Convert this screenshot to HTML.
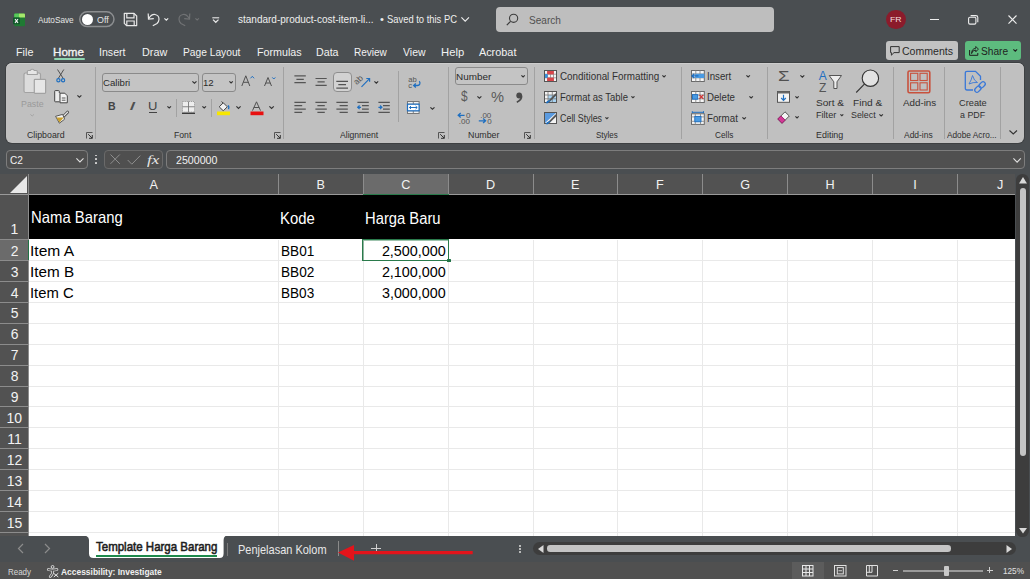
<!DOCTYPE html><html><head><meta charset="utf-8"><style>
html,body{margin:0;padding:0;width:1030px;height:579px;overflow:hidden;background:#4a4e51}
body{position:relative;font-family:"Liberation Sans",sans-serif}
.t{position:absolute;white-space:nowrap;line-height:1;transform-origin:0 0}
svg{overflow:visible}
</style></head><body>
<div style="position:absolute;left:0px;top:0px;width:1030px;height:579px;background:#4a4e51"></div>
<div style="position:absolute;left:6px;top:62.6px;width:1018px;height:80.8px;background:#c0c0c0;border-radius:6px;box-shadow:inset 0 1px 0 #cdcdcd,0 0 0 1px rgba(30,30,30,0.28)"></div>
<div style="position:absolute;left:6px;top:150px;width:82px;height:18.5px;background:#4f4f4f;border:1px solid #7d7d7d;border-radius:4px;box-sizing:border-box"></div>
<div style="position:absolute;left:104px;top:150px;width:59px;height:18.5px;background:#4f4f4f;border:1px solid #6a6a6a;border-radius:4px;box-sizing:border-box"></div>
<div style="position:absolute;left:166px;top:150px;width:858.5px;height:18.5px;background:#505050;border:1px solid #7d7d7d;border-radius:4px;box-sizing:border-box"></div>
<div style="position:absolute;left:0px;top:174px;width:1015px;height:362px;background:#ffffff"></div>
<div style="position:absolute;left:0px;top:174px;width:1015px;height:21px;background:#525252"></div>
<div style="position:absolute;left:0px;top:195px;width:29px;height:341px;background:#525252"></div>
<div style="position:absolute;left:29px;top:195px;width:986px;height:44px;background:#000"></div>
<div style="position:absolute;left:29px;top:260px;width:986px;height:1px;background:#e9e9e9"></div>
<div style="position:absolute;left:0px;top:260px;width:29px;height:1px;background:#8c8c8c"></div>
<div style="position:absolute;left:29px;top:281px;width:986px;height:1px;background:#e9e9e9"></div>
<div style="position:absolute;left:0px;top:281px;width:29px;height:1px;background:#8c8c8c"></div>
<div style="position:absolute;left:29px;top:302px;width:986px;height:1px;background:#e9e9e9"></div>
<div style="position:absolute;left:0px;top:302px;width:29px;height:1px;background:#8c8c8c"></div>
<div style="position:absolute;left:29px;top:323px;width:986px;height:1px;background:#e9e9e9"></div>
<div style="position:absolute;left:0px;top:323px;width:29px;height:1px;background:#8c8c8c"></div>
<div style="position:absolute;left:29px;top:344px;width:986px;height:1px;background:#e9e9e9"></div>
<div style="position:absolute;left:0px;top:344px;width:29px;height:1px;background:#8c8c8c"></div>
<div style="position:absolute;left:29px;top:365px;width:986px;height:1px;background:#e9e9e9"></div>
<div style="position:absolute;left:0px;top:365px;width:29px;height:1px;background:#8c8c8c"></div>
<div style="position:absolute;left:29px;top:386px;width:986px;height:1px;background:#e9e9e9"></div>
<div style="position:absolute;left:0px;top:386px;width:29px;height:1px;background:#8c8c8c"></div>
<div style="position:absolute;left:29px;top:406px;width:986px;height:1px;background:#e9e9e9"></div>
<div style="position:absolute;left:0px;top:406px;width:29px;height:1px;background:#8c8c8c"></div>
<div style="position:absolute;left:29px;top:427px;width:986px;height:1px;background:#e9e9e9"></div>
<div style="position:absolute;left:0px;top:427px;width:29px;height:1px;background:#8c8c8c"></div>
<div style="position:absolute;left:29px;top:448px;width:986px;height:1px;background:#e9e9e9"></div>
<div style="position:absolute;left:0px;top:448px;width:29px;height:1px;background:#8c8c8c"></div>
<div style="position:absolute;left:29px;top:469px;width:986px;height:1px;background:#e9e9e9"></div>
<div style="position:absolute;left:0px;top:469px;width:29px;height:1px;background:#8c8c8c"></div>
<div style="position:absolute;left:29px;top:490px;width:986px;height:1px;background:#e9e9e9"></div>
<div style="position:absolute;left:0px;top:490px;width:29px;height:1px;background:#8c8c8c"></div>
<div style="position:absolute;left:29px;top:511px;width:986px;height:1px;background:#e9e9e9"></div>
<div style="position:absolute;left:0px;top:511px;width:29px;height:1px;background:#8c8c8c"></div>
<div style="position:absolute;left:29px;top:532px;width:986px;height:1px;background:#e9e9e9"></div>
<div style="position:absolute;left:0px;top:532px;width:29px;height:1px;background:#8c8c8c"></div>
<div style="position:absolute;left:0px;top:239px;width:29px;height:1px;background:#8c8c8c"></div>
<div style="position:absolute;left:0px;top:194px;width:1015px;height:1px;background:#9a9a9a"></div>
<div style="position:absolute;left:278px;top:240px;width:1px;height:296px;background:#e9e9e9"></div>
<div style="position:absolute;left:278px;top:174px;width:1px;height:20px;background:#8c8c8c"></div>
<div style="position:absolute;left:363px;top:240px;width:1px;height:296px;background:#e9e9e9"></div>
<div style="position:absolute;left:363px;top:174px;width:1px;height:20px;background:#8c8c8c"></div>
<div style="position:absolute;left:448px;top:240px;width:1px;height:296px;background:#e9e9e9"></div>
<div style="position:absolute;left:448px;top:174px;width:1px;height:20px;background:#8c8c8c"></div>
<div style="position:absolute;left:533px;top:240px;width:1px;height:296px;background:#e9e9e9"></div>
<div style="position:absolute;left:533px;top:174px;width:1px;height:20px;background:#8c8c8c"></div>
<div style="position:absolute;left:617px;top:240px;width:1px;height:296px;background:#e9e9e9"></div>
<div style="position:absolute;left:617px;top:174px;width:1px;height:20px;background:#8c8c8c"></div>
<div style="position:absolute;left:702px;top:240px;width:1px;height:296px;background:#e9e9e9"></div>
<div style="position:absolute;left:702px;top:174px;width:1px;height:20px;background:#8c8c8c"></div>
<div style="position:absolute;left:787px;top:240px;width:1px;height:296px;background:#e9e9e9"></div>
<div style="position:absolute;left:787px;top:174px;width:1px;height:20px;background:#8c8c8c"></div>
<div style="position:absolute;left:872px;top:240px;width:1px;height:296px;background:#e9e9e9"></div>
<div style="position:absolute;left:872px;top:174px;width:1px;height:20px;background:#8c8c8c"></div>
<div style="position:absolute;left:957px;top:240px;width:1px;height:296px;background:#e9e9e9"></div>
<div style="position:absolute;left:957px;top:174px;width:1px;height:20px;background:#8c8c8c"></div>
<div style="position:absolute;left:28px;top:174px;width:1px;height:362px;background:#8c8c8c"></div>
<div style="position:absolute;left:364px;top:174px;width:84px;height:20px;background:#6b6b6b"></div>
<div style="position:absolute;left:363px;top:193.5px;width:86px;height:1.5px;background:#2a7a4b"></div>
<div style="position:absolute;left:0px;top:240px;width:28px;height:20px;background:#6b6b6b"></div>
<div style="position:absolute;left:28px;top:240px;width:1px;height:20px;background:#217346"></div>
<div style="position:absolute;left:362px;top:239px;width:87px;height:22px;border:1px solid #2a7a4b;box-sizing:border-box;box-shadow:inset 1px 1px 0 rgba(42,122,75,0.45)"></div>
<div style="position:absolute;left:447px;top:258.8px;width:3.5px;height:3.5px;background:#217346;border-radius:0.5px"></div>
<svg style="position:absolute;left:10px;top:176px;" width="17" height="17" viewBox="0 0 17 17"><polygon points="17,0 17,17 0,17" fill="#e8e8e8"/></svg>
<div class="t" style="left:38.10px;top:15.75px;font-size:9.16px;color:#e6e6e6;font-weight:400;transform:scaleX(0.8976);">AutoSave</div>
<div class="t" style="left:96.70px;top:15.55px;font-size:9.16px;color:#e6e6e6;font-weight:400;transform:scaleX(0.9679);">Off</div>
<div class="t" style="left:238.40px;top:13.83px;font-size:10.60px;color:#eeeeee;font-weight:400;transform:scaleX(0.9441);">standard-product-cost-item-li...</div>
<div class="t" style="left:380.06px;top:13.83px;font-size:10.60px;color:#eeeeee;font-weight:400;transform:scaleX(1.0482);">•</div>
<div class="t" style="left:387.38px;top:13.83px;font-size:10.60px;color:#eeeeee;font-weight:400;transform:scaleX(0.8864);">Saved to this PC</div>
<div style="position:absolute;left:496px;top:7px;width:277.5px;height:24.7px;background:#bebebe;border-radius:4px"></div>
<div class="t" style="left:528.55px;top:15.89px;font-size:10.17px;color:#505050;font-weight:400;transform:scaleX(0.9909);">Search</div>
<div style="position:absolute;left:886px;top:9.6px;width:19.5px;height:19.5px;background:#8b1b2b;border-radius:50%"></div>
<div class="t" style="left:889.80px;top:15.73px;font-size:7.99px;color:#f2dede;font-weight:400;transform:scaleX(1.0900);">FR</div>
<div class="t" style="left:15.64px;top:46.57px;font-size:10.90px;color:#f2f2f2;font-weight:400;transform:scaleX(0.9912);">File</div>
<div class="t" style="left:52.87px;top:46.57px;font-size:10.90px;color:#f2f2f2;font-weight:400;transform:scaleX(1.0669);-webkit-text-stroke:0.35px #f2f2f2;">Home</div>
<div class="t" style="left:99.45px;top:46.57px;font-size:10.90px;color:#f2f2f2;font-weight:400;transform:scaleX(0.9726);">Insert</div>
<div class="t" style="left:142.03px;top:46.57px;font-size:10.90px;color:#f2f2f2;font-weight:400;transform:scaleX(0.9926);">Draw</div>
<div class="t" style="left:182.88px;top:46.57px;font-size:10.90px;color:#f2f2f2;font-weight:400;transform:scaleX(0.9389);">Page Layout</div>
<div class="t" style="left:256.74px;top:46.57px;font-size:10.90px;color:#f2f2f2;font-weight:400;transform:scaleX(0.9841);">Formulas</div>
<div class="t" style="left:315.74px;top:46.57px;font-size:10.90px;color:#f2f2f2;font-weight:400;transform:scaleX(0.9806);">Data</div>
<div class="t" style="left:353.80px;top:46.57px;font-size:10.90px;color:#f2f2f2;font-weight:400;transform:scaleX(0.9202);">Review</div>
<div class="t" style="left:402.75px;top:46.57px;font-size:10.90px;color:#f2f2f2;font-weight:400;transform:scaleX(0.9622);">View</div>
<div class="t" style="left:440.70px;top:46.57px;font-size:10.90px;color:#f2f2f2;font-weight:400;transform:scaleX(1.0335);">Help</div>
<div class="t" style="left:478.90px;top:46.57px;font-size:10.90px;color:#f2f2f2;font-weight:400;">Acrobat</div>
<div style="position:absolute;left:53.8px;top:58px;width:31.2px;height:2.2px;background:#8fd6b0;border-radius:1px"></div>
<div style="position:absolute;left:886px;top:41.2px;width:72.2px;height:18.6px;background:#c2c2c2;border-radius:3px"></div>
<div class="t" style="left:902.47px;top:46.05px;font-size:11.05px;color:#2a2a2a;font-weight:400;transform:scaleX(0.9548);">Comments</div>
<div style="position:absolute;left:965px;top:41.2px;width:56.4px;height:18.6px;background:#5dbb7e;border-radius:3px"></div>
<div class="t" style="left:981.34px;top:46.35px;font-size:11.05px;color:#1f1f1f;font-weight:400;transform:scaleX(0.9193);">Share</div>
<div class="t" style="left:9.89px;top:153.96px;font-size:11.63px;color:#f0f0f0;font-weight:400;transform:scaleX(0.8710);">C2</div>
<div class="t" style="left:175.77px;top:153.96px;font-size:11.63px;color:#f0f0f0;font-weight:400;transform:scaleX(0.9154);">2500000</div>
<div class="t" style="left:149.51px;top:179.10px;font-size:12.65px;color:#f2f2f2;font-weight:400;">A</div>
<div class="t" style="left:316.47px;top:179.10px;font-size:12.65px;color:#f2f2f2;font-weight:400;">B</div>
<div class="t" style="left:401.22px;top:179.10px;font-size:12.65px;color:#f2f2f2;font-weight:400;">C</div>
<div class="t" style="left:486.04px;top:179.10px;font-size:12.65px;color:#f2f2f2;font-weight:400;">D</div>
<div class="t" style="left:571.06px;top:179.10px;font-size:12.65px;color:#f2f2f2;font-weight:400;">E</div>
<div class="t" style="left:656.05px;top:179.10px;font-size:12.65px;color:#f2f2f2;font-weight:400;">F</div>
<div class="t" style="left:740.29px;top:179.10px;font-size:12.65px;color:#f2f2f2;font-weight:400;">G</div>
<div class="t" style="left:825.46px;top:179.10px;font-size:12.65px;color:#f2f2f2;font-weight:400;">H</div>
<div class="t" style="left:913.17px;top:179.10px;font-size:12.65px;color:#f2f2f2;font-weight:400;">I</div>
<div class="t" style="left:996.93px;top:179.10px;font-size:12.65px;color:#f2f2f2;font-weight:400;">J</div>
<div class="t" style="left:10.53px;top:222.89px;font-size:13.95px;color:#f2f2f2;font-weight:400;">1</div>
<div class="t" style="left:10.74px;top:244.69px;font-size:13.95px;color:#f2f2f2;font-weight:400;">2</div>
<div class="t" style="left:10.74px;top:265.61px;font-size:13.95px;color:#f2f2f2;font-weight:400;">3</div>
<div class="t" style="left:10.78px;top:286.53px;font-size:13.95px;color:#f2f2f2;font-weight:400;">4</div>
<div class="t" style="left:10.74px;top:307.46px;font-size:13.95px;color:#f2f2f2;font-weight:400;">5</div>
<div class="t" style="left:10.67px;top:328.38px;font-size:13.95px;color:#f2f2f2;font-weight:400;">6</div>
<div class="t" style="left:10.74px;top:349.30px;font-size:13.95px;color:#f2f2f2;font-weight:400;">7</div>
<div class="t" style="left:10.71px;top:370.23px;font-size:13.95px;color:#f2f2f2;font-weight:400;">8</div>
<div class="t" style="left:10.74px;top:391.15px;font-size:13.95px;color:#f2f2f2;font-weight:400;">9</div>
<div class="t" style="left:6.61px;top:412.07px;font-size:13.95px;color:#f2f2f2;font-weight:400;">10</div>
<div class="t" style="left:7.20px;top:433.00px;font-size:13.95px;color:#f2f2f2;font-weight:400;">11</div>
<div class="t" style="left:6.71px;top:453.92px;font-size:13.95px;color:#f2f2f2;font-weight:400;">12</div>
<div class="t" style="left:6.64px;top:474.84px;font-size:13.95px;color:#f2f2f2;font-weight:400;">13</div>
<div class="t" style="left:6.54px;top:495.76px;font-size:13.95px;color:#f2f2f2;font-weight:400;">14</div>
<div class="t" style="left:6.64px;top:516.69px;font-size:13.95px;color:#f2f2f2;font-weight:400;">15</div>
<div class="t" style="left:30.51px;top:210.05px;font-size:16.72px;color:#ffffff;font-weight:400;transform:scaleX(0.8897);">Nama Barang</div>
<div class="t" style="left:280.21px;top:210.10px;font-size:16.42px;color:#ffffff;font-weight:400;transform:scaleX(0.9071);">Kode</div>
<div class="t" style="left:365.22px;top:210.20px;font-size:16.42px;color:#ffffff;font-weight:400;transform:scaleX(0.9004);">Harga Baru</div>
<div class="t" style="left:30.40px;top:243.92px;font-size:14.39px;color:#000;font-weight:400;transform:scaleX(1.0836);">Item A</div>
<div class="t" style="left:280.91px;top:243.92px;font-size:14.39px;color:#000;font-weight:400;transform:scaleX(0.9466);">BB01</div>
<div class="t" style="left:381.88px;top:243.92px;font-size:14.39px;color:#000;font-weight:400;">2,500,000</div>
<div class="t" style="left:30.43px;top:264.85px;font-size:14.39px;color:#000;font-weight:400;transform:scaleX(1.0614);">Item B</div>
<div class="t" style="left:280.91px;top:264.85px;font-size:14.39px;color:#000;font-weight:400;transform:scaleX(0.9486);">BB02</div>
<div class="t" style="left:381.88px;top:264.85px;font-size:14.39px;color:#000;font-weight:400;">2,100,000</div>
<div class="t" style="left:30.47px;top:285.78px;font-size:14.39px;color:#000;font-weight:400;transform:scaleX(1.0301);">Item C</div>
<div class="t" style="left:280.91px;top:285.78px;font-size:14.39px;color:#000;font-weight:400;transform:scaleX(0.9445);">BB03</div>
<div class="t" style="left:382.03px;top:285.78px;font-size:14.39px;color:#000;font-weight:400;transform:scaleX(0.9944);">3,000,000</div>
<div style="position:absolute;left:0px;top:562px;width:1030px;height:17px;background:#505050"></div>
<svg style="position:absolute;left:80px;top:535px" width="150" height="25" viewBox="0 0 150 25"><path d="M0,0 L0,0 Q9,0 9,5 L9,18.5 Q9,23 13.5,23 L139.5,23 Q143.6,23 143.6,18.5 L143.6,5 Q143.6,0 150,0 Z" fill="#ffffff"/></svg>
<div class="t" style="left:96.07px;top:540.18px;font-size:13.37px;color:#1e1e1e;font-weight:400;transform:scaleX(0.8603);-webkit-text-stroke:0.6px #1e1e1e;">Template Harga Barang</div>
<div style="position:absolute;left:96px;top:554.5px;width:121px;height:2px;background:#1e8a4c"></div>
<div style="position:absolute;left:226.5px;top:543px;width:1px;height:13px;background:#7a7a7a"></div>
<div class="t" style="left:237.72px;top:543.95px;font-size:12.94px;color:#e8e8e8;font-weight:400;transform:scaleX(0.8492);">Penjelasan Kolom</div>
<div style="position:absolute;left:337.5px;top:541px;width:1px;height:15px;background:#8a8a8a"></div>
<div style="position:absolute;left:371.3px;top:547.5px;width:9.7px;height:1.2px;background:#cfcfcf"></div>
<div style="position:absolute;left:375.6px;top:543.5px;width:1.2px;height:9.5px;background:#cfcfcf"></div>
<svg style="position:absolute;left:338px;top:544px;" width="136" height="18" viewBox="0 0 136 18"><polygon points="0,8.6 16,1 16,6.9 134.7,6.9 134.7,10.3 16,10.3 16,16.8" fill="#e3141b"/></svg>
<svg style="position:absolute;left:17px;top:543px;" width="8" height="11" viewBox="0 0 8 11"><path d="M6,1 L1.5,5.5 L6,10" stroke="#8c8c8c" stroke-width="1.2" fill="none"/></svg>
<svg style="position:absolute;left:43px;top:543px;" width="8" height="11" viewBox="0 0 8 11"><path d="M2,1 L6.5,5.5 L2,10" stroke="#8c8c8c" stroke-width="1.2" fill="none"/></svg>
<div style="position:absolute;left:519.3px;top:545.0px;width:1.6px;height:1.6px;background:#d0d0d0;border-radius:50%"></div>
<div style="position:absolute;left:519.3px;top:548.2px;width:1.6px;height:1.6px;background:#d0d0d0;border-radius:50%"></div>
<div style="position:absolute;left:519.3px;top:551.4px;width:1.6px;height:1.6px;background:#d0d0d0;border-radius:50%"></div>
<div style="position:absolute;left:533px;top:541.6px;width:483px;height:13.7px;background:#3d3d3d;border-radius:7px"></div>
<div style="position:absolute;left:547px;top:545px;width:404px;height:6.5px;background:#c4c4c4;border-radius:3.25px"></div>
<svg style="position:absolute;left:537.5px;top:544.5px;" width="6" height="8" viewBox="0 0 6 8"><polygon points="0,4 5.5,0 5.5,8" fill="#d8d8d8"/></svg>
<svg style="position:absolute;left:1006px;top:544.5px;" width="6" height="8" viewBox="0 0 6 8"><polygon points="6,4 0.5,0 0.5,8" fill="#d8d8d8"/></svg>
<div style="position:absolute;left:1016.3px;top:174.2px;width:12.8px;height:363px;background:#3d3d3d;border-radius:6.4px"></div>
<div style="position:absolute;left:1019.6px;top:188px;width:6.3px;height:268.4px;background:#c4c4c4;border-radius:3.15px"></div>
<svg style="position:absolute;left:1018.5px;top:177px;" width="8" height="6.5" viewBox="0 0 8 6.5"><polygon points="4,0 8,6.5 0,6.5" fill="#d8d8d8"/></svg>
<svg style="position:absolute;left:1018.5px;top:527.9px;" width="8" height="5.5" viewBox="0 0 8 5.5"><polygon points="4,5.5 8,0 0,0" fill="#d8d8d8"/></svg>
<div class="t" style="left:8.06px;top:567.53px;font-size:9.30px;color:#d8d8d8;font-weight:400;transform:scaleX(0.8569);">Ready</div>
<div class="t" style="left:61.49px;top:567.53px;font-size:9.30px;color:#f0f0f0;font-weight:700;transform:scaleX(0.9074);">Accessibility: Investigate</div>
<div class="t" style="left:27.16px;top:130.57px;font-size:9.01px;color:#2e2e2e;font-weight:400;transform:scaleX(0.9751);">Clipboard</div>
<div class="t" style="left:174.01px;top:130.57px;font-size:9.01px;color:#2e2e2e;font-weight:400;transform:scaleX(0.9619);">Font</div>
<div class="t" style="left:340.30px;top:130.57px;font-size:9.01px;color:#2e2e2e;font-weight:400;transform:scaleX(0.9547);">Alignment</div>
<div class="t" style="left:468.09px;top:130.57px;font-size:9.01px;color:#2e2e2e;font-weight:400;transform:scaleX(0.9814);">Number</div>
<div class="t" style="left:596.34px;top:130.57px;font-size:9.01px;color:#2e2e2e;font-weight:400;transform:scaleX(0.8894);">Styles</div>
<div class="t" style="left:714.59px;top:130.57px;font-size:9.01px;color:#2e2e2e;font-weight:400;transform:scaleX(0.9178);">Cells</div>
<div class="t" style="left:815.99px;top:130.57px;font-size:9.01px;color:#2e2e2e;font-weight:400;transform:scaleX(0.9915);">Editing</div>
<div class="t" style="left:904.10px;top:130.57px;font-size:9.01px;color:#2e2e2e;font-weight:400;transform:scaleX(0.9393);">Add-ins</div>
<div class="t" style="left:947.10px;top:130.57px;font-size:9.01px;color:#2e2e2e;font-weight:400;transform:scaleX(0.9182);">Adobe Acro...</div>
<svg style="position:absolute;left:86px;top:132px;" width="7" height="7" viewBox="0 0 7 7"><path d="M0.5,6.5 L0.5,0.5 L6.5,0.5" stroke="#555" stroke-width="1" fill="none"/><path d="M2.2,2.2 L6.2,6.2 M3,6.3 L6.3,6.3 L6.3,3" stroke="#333" stroke-width="1" fill="none"/></svg>
<svg style="position:absolute;left:274px;top:132px;" width="7" height="7" viewBox="0 0 7 7"><path d="M0.5,6.5 L0.5,0.5 L6.5,0.5" stroke="#555" stroke-width="1" fill="none"/><path d="M2.2,2.2 L6.2,6.2 M3,6.3 L6.3,6.3 L6.3,3" stroke="#333" stroke-width="1" fill="none"/></svg>
<svg style="position:absolute;left:438.3px;top:132px;" width="7" height="7" viewBox="0 0 7 7"><path d="M0.5,6.5 L0.5,0.5 L6.5,0.5" stroke="#555" stroke-width="1" fill="none"/><path d="M2.2,2.2 L6.2,6.2 M3,6.3 L6.3,6.3 L6.3,3" stroke="#333" stroke-width="1" fill="none"/></svg>
<svg style="position:absolute;left:524px;top:132px;" width="7" height="7" viewBox="0 0 7 7"><path d="M0.5,6.5 L0.5,0.5 L6.5,0.5" stroke="#555" stroke-width="1" fill="none"/><path d="M2.2,2.2 L6.2,6.2 M3,6.3 L6.3,6.3 L6.3,3" stroke="#333" stroke-width="1" fill="none"/></svg>
<div style="position:absolute;left:95px;top:67px;width:1px;height:71.5px;background:#a2a2a2"></div>
<div style="position:absolute;left:283px;top:67px;width:1px;height:71.5px;background:#a2a2a2"></div>
<div style="position:absolute;left:448px;top:67px;width:1px;height:71.5px;background:#a2a2a2"></div>
<div style="position:absolute;left:534px;top:67px;width:1px;height:71.5px;background:#a2a2a2"></div>
<div style="position:absolute;left:681px;top:67px;width:1px;height:71.5px;background:#a2a2a2"></div>
<div style="position:absolute;left:767px;top:67px;width:1px;height:71.5px;background:#a2a2a2"></div>
<div style="position:absolute;left:893px;top:67px;width:1px;height:71.5px;background:#a2a2a2"></div>
<div style="position:absolute;left:944px;top:67px;width:1px;height:71.5px;background:#a2a2a2"></div>
<div style="position:absolute;left:1000px;top:67px;width:1px;height:71.5px;background:#a2a2a2"></div>
<svg style="position:absolute;left:23px;top:69px;" width="24" height="26" viewBox="0 0 24 26"><rect x="1" y="4" width="16.5" height="19.5" rx="1.5" fill="#dcdcdc" stroke="#a2a2a2" stroke-width="1.2"/><path d="M4.3,5.5 L4.3,2.5 Q4.3,1.5 5.3,1.5 L7.3,1.5 Q8,0.3 9.3,0.3 Q10.6,0.3 11.3,1.5 L13.3,1.5 Q14.3,1.5 14.3,2.5 L14.3,5.5 Z" fill="#e6e6e6" stroke="#a2a2a2" stroke-width="1.1"/><rect x="11.3" y="10.3" width="11.3" height="14" rx="0.8" fill="#e6e6e6" stroke="#a2a2a2" stroke-width="1.2"/></svg>
<div class="t" style="left:21.19px;top:98.53px;font-size:9.88px;color:#9a9a9a;font-weight:400;transform:scaleX(0.8933);">Paste</div>
<svg style="position:absolute;left:30.2px;top:114.29px;" width="4.400000000000002" height="2.4200000000000013" viewBox="0 0 4.400000000000002 2.4200000000000013"><path d="M0.4,0.4 L2.200000000000001,2.0200000000000014 L4.000000000000002,0.4" stroke="#a3a3a3" stroke-width="1" fill="none"/></svg>
<svg style="position:absolute;left:56px;top:69px;" width="10" height="14" viewBox="0 0 10 14"><path d="M1.5,0.5 L7.3,9.6 M7.8,0.5 L2.2,9.6" stroke="#444" stroke-width="0.9" fill="none"/><circle cx="2.4" cy="11.2" r="1.6" fill="none" stroke="#1f6fc0" stroke-width="1.2"/><circle cx="7.1" cy="11.2" r="1.6" fill="none" stroke="#1f6fc0" stroke-width="1.2"/></svg>
<svg style="position:absolute;left:53.5px;top:89.5px;" width="14" height="14" viewBox="0 0 14 14"><path d="M5.5,11.8 L1.3,11.8 Q0.7,11.8 0.7,11.2 L0.7,1.3 Q0.7,0.6 1.3,0.6 L4.6,0.6 Q5.3,0.6 5.3,1.3 L5.3,3" fill="#ececec" stroke="#444" stroke-width="1"/><path d="M6,3.2 L10.8,3.2 L13.3,5.8 L13.3,12.8 L6,12.8 Z" fill="#f4f4f4" stroke="#444" stroke-width="1"/><path d="M7.8,8 L11.5,8 M7.8,10.2 L11.5,10.2" stroke="#444" stroke-width="0.9"/></svg>
<svg style="position:absolute;left:77.2px;top:95.48px;" width="4.799999999999997" height="2.639999999999999" viewBox="0 0 4.799999999999997 2.639999999999999"><path d="M0.4,0.4 L2.3999999999999986,2.239999999999999 L4.399999999999997,0.4" stroke="#333" stroke-width="1.2" fill="none"/></svg>
<svg style="position:absolute;left:54.5px;top:110.5px;" width="14" height="13" viewBox="0 0 14 13"><path d="M12.6,1.2 L8.6,5.2" stroke="#505050" stroke-width="3" stroke-linecap="round"/><path d="M12.6,1.2 L8.6,5.2" stroke="#f0f0f0" stroke-width="1.2" stroke-linecap="round"/><path d="M0.6,5.3 L7.6,3.4 L9.6,8.2 L4.4,12.2 Z" fill="#f4f4f4" stroke="#4a4a4a" stroke-width="0.9" stroke-linejoin="round"/><path d="M1.3,6.6 L8.7,6.6 L4.5,11.6 Z" fill="#caa02e"/></svg>
<div style="position:absolute;left:102.4px;top:72.5px;width:96.3px;height:19px;border:1px solid #8a8a8a;border-radius:3px;box-sizing:border-box;background:#c4c4c4"></div>
<div class="t" style="left:103.42px;top:77.70px;font-size:9.45px;color:#2a2a2a;font-weight:400;transform:scaleX(1.0175);">Calibri</div>
<svg style="position:absolute;left:191.9px;top:80.9525px;" width="4.900000000000006" height="2.6950000000000034" viewBox="0 0 4.900000000000006 2.6950000000000034"><path d="M0.4,0.4 L2.450000000000003,2.2950000000000035 L4.500000000000005,0.4" stroke="#333" stroke-width="1.2" fill="none"/></svg>
<div style="position:absolute;left:201.5px;top:72.5px;width:34.1px;height:19px;border:1px solid #8a8a8a;border-radius:3px;box-sizing:border-box;background:#c4c4c4"></div>
<div class="t" style="left:202.78px;top:77.70px;font-size:9.45px;color:#2a2a2a;font-weight:400;transform:scaleX(1.0209);">12</div>
<svg style="position:absolute;left:228.8px;top:81.145px;" width="4.199999999999989" height="2.309999999999994" viewBox="0 0 4.199999999999989 2.309999999999994"><path d="M0.4,0.4 L2.0999999999999943,1.909999999999994 L3.7999999999999887,0.4" stroke="#333" stroke-width="1.2" fill="none"/></svg>
<svg style="position:absolute;left:241px;top:75px;" width="14" height="12" viewBox="0 0 14 12"><path d="M0.8,11 L4.8,0.8 L8.8,11 M2.3,7.3 L7.3,7.3" stroke="#505050" stroke-width="1" fill="none"/><path d="M9.5,3.3 L11.3,1.3 L13.1,3.3" stroke="#1f6fc0" stroke-width="1" fill="none"/></svg>
<svg style="position:absolute;left:263.5px;top:76px;" width="12" height="11" viewBox="0 0 12 11"><path d="M0.5,10 L4,1.5 L7.5,10 M1.8,7 L6.2,7" stroke="#505050" stroke-width="1" fill="none"/><path d="M8.3,1.4 L9.8,3 L11.3,1.4" stroke="#1f6fc0" stroke-width="1" fill="none"/></svg>
<div class="t" style="left:108.11px;top:101.18px;font-size:11.48px;color:#444;font-weight:700;transform:scaleX(0.9204);">B</div>
<div class="t" style="left:129.24px;top:101.18px;font-size:11.48px;color:#505050;font-weight:400;transform:scaleX(2.0901);font-style:italic;">I</div>
<div class="t" style="left:148.43px;top:101.25px;font-size:11.05px;color:#444;font-weight:400;transform:scaleX(1.1753);">U</div>
<div style="position:absolute;left:149.4px;top:112px;width:7.4px;height:1px;background:#444"></div>
<svg style="position:absolute;left:166.6px;top:106.08999999999999px;" width="4.400000000000006" height="2.4200000000000035" viewBox="0 0 4.400000000000006 2.4200000000000035"><path d="M0.4,0.4 L2.200000000000003,2.0200000000000036 L4.000000000000005,0.4" stroke="#333" stroke-width="1.2" fill="none"/></svg>
<div style="position:absolute;left:176px;top:99px;width:1px;height:18.400000000000006px;background:#a2a2a2"></div>
<svg style="position:absolute;left:182px;top:101px;" width="13" height="13" viewBox="0 0 13 13"><rect x="0.5" y="0.5" width="12" height="10.5" fill="#eeeeee" stroke="#9a9a9a" stroke-width="0.9" stroke-dasharray="1.2,0.9"/><path d="M6.5,0.5 L6.5,11 M0.5,5.75 L12.5,5.75" stroke="#777" stroke-width="0.9"/><path d="M0,12.3 L13,12.3" stroke="#333" stroke-width="1.3"/></svg>
<svg style="position:absolute;left:201.6px;top:106.08999999999999px;" width="4.400000000000006" height="2.4200000000000035" viewBox="0 0 4.400000000000006 2.4200000000000035"><path d="M0.4,0.4 L2.200000000000003,2.0200000000000036 L4.000000000000005,0.4" stroke="#333" stroke-width="1.2" fill="none"/></svg>
<div style="position:absolute;left:211px;top:99px;width:1px;height:18.400000000000006px;background:#a2a2a2"></div>
<svg style="position:absolute;left:217px;top:100.5px;" width="14" height="15" viewBox="0 0 14 15"><path d="M2.2,5.8 L6.3,1.8 L10.3,5.8 L6.3,9.8 Z" fill="#f2f2f2" stroke="#444" stroke-width="1"/><path d="M4.5,0.5 L6.3,2.2" stroke="#444" stroke-width="1"/><path d="M11.2,4.3 Q12.6,6.5 11.5,8.2" stroke="#1f6fc0" stroke-width="1.5" fill="none"/><rect x="0" y="10.5" width="13" height="3.7" fill="#f6e600"/></svg>
<svg style="position:absolute;left:236.1px;top:105.925px;" width="5.0" height="2.75" viewBox="0 0 5.0 2.75"><path d="M0.4,0.4 L2.5,2.35 L4.6,0.4" stroke="#333" stroke-width="1.2" fill="none"/></svg>
<svg style="position:absolute;left:249.5px;top:100.5px;" width="14" height="15" viewBox="0 0 14 15"><path d="M2.5,9.6 L6.5,0.8 L10.5,9.6 M3.8,6.5 L9.2,6.5" stroke="#505050" stroke-width="1" fill="none"/><rect x="0.5" y="10.5" width="13" height="3.7" fill="#e81010"/></svg>
<svg style="position:absolute;left:268.8px;top:105.87px;" width="5.199999999999989" height="2.859999999999994" viewBox="0 0 5.199999999999989 2.859999999999994"><path d="M0.4,0.4 L2.5999999999999943,2.459999999999994 L4.799999999999988,0.4" stroke="#333" stroke-width="1.2" fill="none"/></svg>
<svg style="position:absolute;left:294px;top:74px;" width="13" height="11" viewBox="0 0 13 11"><path d="M0.4,1.8 L11.8,1.8 M2.4,5.3 L9.8,5.3 M0.4,8.7 L11.8,8.7 " stroke="#555" stroke-width="1.2" fill="none"/></svg>
<svg style="position:absolute;left:315px;top:77px;" width="13" height="11" viewBox="0 0 13 11"><path d="M0.5,1.5 L11.7,1.5 M2.5,4.9 L9.7,4.9 M0.5,8.3 L11.7,8.3 " stroke="#555" stroke-width="1.2" fill="none"/></svg>
<div style="position:absolute;left:332.5px;top:72.4px;width:19px;height:19.2px;border:1px solid #8e8e8e;border-radius:4px;box-sizing:border-box;background:#d2d2d2"></div>
<svg style="position:absolute;left:336px;top:79px;" width="13" height="11" viewBox="0 0 13 11"><path d="M0.3,2.4 L12,2.4 M2.3,5.7 L10,5.7 M0.3,9.1 L12,9.1 " stroke="#555" stroke-width="1.2" fill="none"/></svg>
<svg style="position:absolute;left:356px;top:75px;" width="15" height="13" viewBox="0 0 15 13"><text x="0" y="0" font-family="Liberation Sans" font-size="8.5" fill="#555" transform="translate(0.8,10.3) rotate(-45)">ab</text><path d="M5.5,11.8 L13.3,3.8" stroke="#1f6fc0" stroke-width="1.2"/><path d="M10.3,3.5 L13.6,3.5 L13.6,6.8" stroke="#1f6fc0" stroke-width="1.2" fill="none"/></svg>
<svg style="position:absolute;left:374.2px;top:81.135px;" width="4.600000000000023" height="2.5300000000000127" viewBox="0 0 4.600000000000023 2.5300000000000127"><path d="M0.4,0.4 L2.3000000000000114,2.1300000000000128 L4.200000000000022,0.4" stroke="#333" stroke-width="1.2" fill="none"/></svg>
<svg style="position:absolute;left:294px;top:101px;" width="13" height="13" viewBox="0 0 13 13"><path d="M0.4,1.3 L11.8,1.3 M0.4,4.6 L8.2,4.6 M0.4,8.1 L11.8,8.1 M0.4,11.4 L8.2,11.4 " stroke="#555" stroke-width="1.2" fill="none"/></svg>
<svg style="position:absolute;left:315px;top:101px;" width="13" height="13" viewBox="0 0 13 13"><path d="M0.4,1.3 L11.8,1.3 M2.4,4.6 L9.8,4.6 M0.4,8.1 L11.8,8.1 M2.4,11.4 L9.8,11.4 " stroke="#555" stroke-width="1.2" fill="none"/></svg>
<svg style="position:absolute;left:336px;top:101px;" width="13" height="13" viewBox="0 0 13 13"><path d="M0.4,1.3 L11.8,1.3 M3.6,4.6 L11.8,4.6 M0.4,8.1 L11.8,8.1 M3.6,11.4 L11.8,11.4 " stroke="#555" stroke-width="1.2" fill="none"/></svg>
<svg style="position:absolute;left:357px;top:101px;" width="13" height="13" viewBox="0 0 13 13"><path d="M0.4,1.3 L11.8,1.3 M0.4,11.4 L11.8,11.4 " stroke="#555" stroke-width="1.2" fill="none"/><path d="M5,4.6 L11.8,4.6 M5,8.1 L11.8,8.1 " stroke="#555" stroke-width="1.2" fill="none"/><path d="M4,6.3 L0.8,6.3 M2.6,4.5 L0.7,6.3 L2.6,8.1" stroke="#1f6fc0" stroke-width="1.2" fill="none"/></svg>
<svg style="position:absolute;left:378px;top:101px;" width="13" height="13" viewBox="0 0 13 13"><path d="M0.4,1.3 L11.8,1.3 M0.4,11.4 L11.8,11.4 " stroke="#555" stroke-width="1.2" fill="none"/><path d="M5,4.6 L11.8,4.6 M5,8.1 L11.8,8.1 " stroke="#555" stroke-width="1.2" fill="none"/><path d="M0.4,6.3 L3.8,6.3 M2,4.5 L3.9,6.3 L2,8.1" stroke="#1f6fc0" stroke-width="1.2" fill="none"/></svg>
<div style="position:absolute;left:398px;top:71px;width:1px;height:50.5px;background:#a2a2a2"></div>
<svg style="position:absolute;left:408px;top:76px;" width="13" height="13" viewBox="0 0 13 13"><text x="0.3" y="5.6" font-family="Liberation Sans" font-size="7.6" fill="#555">ab</text><text x="0.3" y="11.8" font-family="Liberation Sans" font-size="7.6" fill="#555">c</text><path d="M11.2,5.3 Q12.3,6.3 11.8,8 Q11.2,9.5 9.5,9.5 L5.8,9.5 M7.8,7.6 L5.7,9.5 L7.8,11.4" stroke="#1f6fc0" stroke-width="1.3" fill="none"/></svg>
<svg style="position:absolute;left:407px;top:101px;" width="13" height="13" viewBox="0 0 13 13"><rect x="0.5" y="0.5" width="11.6" height="12" fill="#f0f0f0" stroke="#777" stroke-width="1"/><path d="M6.3,0.5 L6.3,3.2 M6.3,9.8 L6.3,12.5 M0.5,3.2 L12.1,3.2 M0.5,9.8 L12.1,9.8" stroke="#777" stroke-width="0.9"/><rect x="0.5" y="3.2" width="11.6" height="6.6" fill="#ffffff" stroke="#1f6fc0" stroke-width="1.2"/><path d="M2.5,6.5 L10.1,6.5 M4,5 L2.4,6.5 L4,8 M8.6,5 L10.2,6.5 L8.6,8" stroke="#1f6fc0" stroke-width="1" fill="none"/></svg>
<svg style="position:absolute;left:430px;top:106.6525px;" width="4.899999999999977" height="2.694999999999988" viewBox="0 0 4.899999999999977 2.694999999999988"><path d="M0.4,0.4 L2.4499999999999886,2.294999999999988 L4.499999999999977,0.4" stroke="#333" stroke-width="1.2" fill="none"/></svg>
<div style="position:absolute;left:455.2px;top:66.6px;width:72.5px;height:18.7px;border:1px solid #8a8a8a;border-radius:3px;box-sizing:border-box;background:#c4c4c4"></div>
<div class="t" style="left:455.81px;top:72.95px;font-size:9.16px;color:#2a2a2a;font-weight:400;transform:scaleX(1.0826);">Number</div>
<svg style="position:absolute;left:521px;top:75.04499999999999px;" width="4.2000000000000455" height="2.3100000000000254" viewBox="0 0 4.2000000000000455 2.3100000000000254"><path d="M0.4,0.4 L2.1000000000000227,1.9100000000000255 L3.8000000000000456,0.4" stroke="#333" stroke-width="1.2" fill="none"/></svg>
<div class="t" style="left:460.78px;top:89.07px;font-size:14.80px;color:#5a5a5a;font-weight:400;transform:scaleX(0.8032);">$</div>
<svg style="position:absolute;left:477.2px;top:95.67999999999999px;" width="4.800000000000011" height="2.6400000000000063" viewBox="0 0 4.800000000000011 2.6400000000000063"><path d="M0.4,0.4 L2.4000000000000057,2.2400000000000064 L4.400000000000011,0.4" stroke="#333" stroke-width="1.2" fill="none"/></svg>
<div class="t" style="left:490.69px;top:89.23px;font-size:15.20px;color:#5a5a5a;font-weight:400;transform:scaleX(0.9628);">%</div>
<svg style="position:absolute;left:515px;top:91.5px;" width="8" height="11" viewBox="0 0 8 11"><circle cx="4.2" cy="3.5" r="2.9" fill="#4a4a4a"/><path d="M6.6,3.8 Q6.8,8 1.8,10.2" stroke="#4a4a4a" stroke-width="1.7" fill="none"/></svg>
<svg style="position:absolute;left:457px;top:110.5px;" width="15" height="14" viewBox="0 0 15 14"><path d="M7.6,4.3 L1.4,4.3 M3.7,2 L1.2,4.3 L3.7,6.6" stroke="#1f6fc0" stroke-width="1.3" fill="none"/><text x="9" y="6.7" font-family="Liberation Sans" font-size="8" fill="#555">0</text><text x="1.8" y="13.2" font-family="Liberation Sans" font-size="8" fill="#555">.00</text></svg>
<svg style="position:absolute;left:478px;top:110.5px;" width="15" height="14" viewBox="0 0 15 14"><text x="2.2" y="6.7" font-family="Liberation Sans" font-size="8" fill="#555">.00</text><path d="M0.8,9.8 L7.4,9.8 M5.1,7.5 L7.6,9.8 L5.1,12.1" stroke="#1f6fc0" stroke-width="1.3" fill="none"/><text x="9.2" y="13.2" font-family="Liberation Sans" font-size="8" fill="#555">0</text></svg>
<svg style="position:absolute;left:544px;top:70px;" width="13" height="12" viewBox="0 0 13 12"><rect x="0.5" y="0.5" width="12" height="11" fill="#f4f4f4"/><path d="M3.5,0.5 L3.5,11.5 M6.5,0.5 L6.5,11.5 M9.5,0.5 L9.5,11.5 M0.5,4.2 L12.5,4.2 M0.5,7.8 L12.5,7.8" stroke="#8a8a8a" stroke-width="0.8"/><rect x="3.2" y="0.5" width="6.6" height="3.9" fill="#d9454a"/><rect x="0.5" y="4" width="3.2" height="4" fill="#3b8fd9"/><rect x="3.2" y="7.6" width="6.6" height="3.9" fill="#d9454a"/><rect x="0.5" y="0.5" width="12" height="11" fill="none" stroke="#555" stroke-width="1"/></svg>
<svg style="position:absolute;left:544px;top:91px;" width="13" height="12" viewBox="0 0 13 12"><rect x="0.5" y="0.5" width="12" height="11" fill="#f4f4f4" stroke="#555" stroke-width="1"/><rect x="4" y="4" width="8.5" height="7.5" fill="#a8d4f4"/><path d="M4,0.5 L4,11.5 M8.3,0.5 L8.3,11.5 M0.5,4 L12.5,4 M0.5,7.8 L12.5,7.8" stroke="#777" stroke-width="0.8"/><rect x="0.5" y="0.5" width="12" height="11" fill="none" stroke="#555" stroke-width="1"/><path d="M12.3,3 L5,10.3" stroke="#555" stroke-width="1.8"/><path d="M6,9.3 L3.5,12 L2.5,12 L2.8,10.8 Z" fill="#1f6fc0" stroke="#1f6fc0" stroke-width="1"/></svg>
<svg style="position:absolute;left:544px;top:112px;" width="13" height="12" viewBox="0 0 13 12"><rect x="0.5" y="0.5" width="12" height="11" fill="#f4f4f4" stroke="#555" stroke-width="1"/><path d="M0.5,0.5 L12.5,0.5 L0.5,11.5 Z" fill="#5b9be0"/><rect x="0.5" y="0.5" width="12" height="11" fill="none" stroke="#555" stroke-width="1"/><path d="M12.3,3 L5,10.3" stroke="#555" stroke-width="1.8"/><path d="M6,9.3 L3.5,12 L2.5,12 L2.8,10.8 Z" fill="#1f6fc0" stroke="#1f6fc0" stroke-width="1"/></svg>
<div class="t" style="left:559.71px;top:70.72px;font-size:10.61px;color:#303030;font-weight:400;transform:scaleX(0.9287);">Conditional Formatting</div>
<svg style="position:absolute;left:662.3px;top:75.07249999999999px;" width="4.100000000000023" height="2.2550000000000128" viewBox="0 0 4.100000000000023 2.2550000000000128"><path d="M0.4,0.4 L2.0500000000000114,1.8550000000000129 L3.700000000000023,0.4" stroke="#333" stroke-width="1.2" fill="none"/></svg>
<div class="t" style="left:559.54px;top:91.82px;font-size:10.61px;color:#303030;font-weight:400;transform:scaleX(0.8955);">Format as Table</div>
<svg style="position:absolute;left:630.7px;top:96.12750000000001px;" width="3.8999999999999773" height="2.1449999999999876" viewBox="0 0 3.8999999999999773 2.1449999999999876"><path d="M0.4,0.4 L1.9499999999999886,1.7449999999999877 L3.4999999999999774,0.4" stroke="#333" stroke-width="1.2" fill="none"/></svg>
<div class="t" style="left:559.85px;top:112.72px;font-size:10.61px;color:#303030;font-weight:400;transform:scaleX(0.8389);">Cell Styles</div>
<svg style="position:absolute;left:605.2px;top:117.15500000000002px;" width="3.7999999999999545" height="2.089999999999975" viewBox="0 0 3.7999999999999545 2.089999999999975"><path d="M0.4,0.4 L1.8999999999999773,1.689999999999975 L3.3999999999999546,0.4" stroke="#333" stroke-width="1.2" fill="none"/></svg>
<svg style="position:absolute;left:691.4px;top:70px;" width="14" height="12" viewBox="0 0 14 12"><rect x="0.5" y="0.5" width="12.8" height="11" fill="#f6f6f6" stroke="#6a6a6a" stroke-width="1"/><path d="M4.8,0.5 L4.8,11.5 M9,0.5 L9,11.5 M0.5,4 L13.3,4 M0.5,7.8 L13.3,7.8" stroke="#8a8a8a" stroke-width="0.9"/><rect x="4.3" y="3.8" width="9" height="4.2" fill="#4a9be3"/><path d="M7.5,5.9 L1.2,5.9 M3.3,3.8 L1,5.9 L3.3,8" stroke="#1f6fc0" stroke-width="1.3" fill="none"/></svg>
<svg style="position:absolute;left:691.4px;top:91px;" width="14" height="12" viewBox="0 0 14 12"><rect x="0.5" y="0.5" width="12.8" height="11" fill="#f6f6f6" stroke="#6a6a6a" stroke-width="1"/><path d="M4.8,0.5 L4.8,11.5 M9,0.5 L9,11.5 M0.5,4 L13.3,4 M0.5,7.8 L13.3,7.8" stroke="#8a8a8a" stroke-width="0.9"/><rect x="1.5" y="3.6" width="5.2" height="4.6" fill="#4a9be3" stroke="#1f6fc0" stroke-width="0.9"/><path d="M8.5,3.9 L12.3,7.9 M12.3,3.9 L8.5,7.9" stroke="#d03030" stroke-width="1.3"/></svg>
<svg style="position:absolute;left:691.4px;top:110.5px;" width="14" height="14" viewBox="0 0 14 14"><path d="M1.3,1.3 L12.5,1.3 M1.3,0.2 L1.3,2.5 M12.5,0.2 L12.5,2.5" stroke="#1f6fc0" stroke-width="1"/><rect x="0.5" y="2.8" width="12.8" height="10.6" fill="#f6f6f6" stroke="#6a6a6a" stroke-width="1"/><path d="M4.3,2.8 L4.3,13.4 M9.5,2.8 L9.5,13.4 M0.5,5.9 L13.3,5.9 M0.5,10.3 L13.3,10.3" stroke="#8a8a8a" stroke-width="0.9"/><rect x="3.8" y="5.4" width="6.2" height="5.4" fill="#4a9be3" stroke="#1f6fc0" stroke-width="0.9"/></svg>
<div class="t" style="left:707.13px;top:71.51px;font-size:10.03px;color:#303030;font-weight:400;transform:scaleX(0.9660);">Insert</div>
<svg style="position:absolute;left:746.1px;top:74.9175px;" width="4.2999999999999545" height="2.3649999999999753" viewBox="0 0 4.2999999999999545 2.3649999999999753"><path d="M0.4,0.4 L2.1499999999999773,1.9649999999999754 L3.8999999999999546,0.4" stroke="#333" stroke-width="1.2" fill="none"/></svg>
<div class="t" style="left:707.23px;top:91.82px;font-size:10.61px;color:#303030;font-weight:400;transform:scaleX(0.9118);">Delete</div>
<svg style="position:absolute;left:749.3px;top:96.01749999999998px;" width="4.300000000000068" height="2.3650000000000375" viewBox="0 0 4.300000000000068 2.3650000000000375"><path d="M0.4,0.4 L2.150000000000034,1.9650000000000376 L3.9000000000000683,0.4" stroke="#333" stroke-width="1.2" fill="none"/></svg>
<div class="t" style="left:707.22px;top:112.52px;font-size:10.61px;color:#303030;font-weight:400;transform:scaleX(0.9180);">Format</div>
<svg style="position:absolute;left:741.8px;top:116.61749999999998px;" width="4.300000000000068" height="2.3650000000000375" viewBox="0 0 4.300000000000068 2.3650000000000375"><path d="M0.4,0.4 L2.150000000000034,1.9650000000000376 L3.9000000000000683,0.4" stroke="#333" stroke-width="1.2" fill="none"/></svg>
<div class="t" style="left:777.77px;top:69.23px;font-size:14.50px;color:#505050;font-weight:400;transform:scaleX(1.2882);">Σ</div>
<svg style="position:absolute;left:800px;top:74.50749999999998px;" width="4.7000000000000455" height="2.5850000000000253" viewBox="0 0 4.7000000000000455 2.5850000000000253"><path d="M0.4,0.4 L2.3500000000000227,2.1850000000000254 L4.300000000000045,0.4" stroke="#333" stroke-width="1.2" fill="none"/></svg>
<svg style="position:absolute;left:777px;top:91px;" width="13" height="12" viewBox="0 0 13 12"><rect x="0.5" y="0.5" width="12" height="10.8" fill="#f4f4f4" stroke="#555" stroke-width="1"/><rect x="0.5" y="0.5" width="12" height="2" fill="#666"/><path d="M6.5,3.8 L6.5,9.3 M4.2,7 L6.5,9.3 L8.8,7" stroke="#1f6fc0" stroke-width="1.2" fill="none"/></svg>
<svg style="position:absolute;left:795px;top:95.67249999999999px;" width="4.100000000000023" height="2.2550000000000128" viewBox="0 0 4.100000000000023 2.2550000000000128"><path d="M0.4,0.4 L2.0500000000000114,1.8550000000000129 L3.700000000000023,0.4" stroke="#333" stroke-width="1.2" fill="none"/></svg>
<svg style="position:absolute;left:777px;top:111px;" width="13" height="13" viewBox="0 0 13 13"><path d="M0.8,8 L5,12.3 L12.3,5 L8,0.8 Z" fill="#f4f4f4" stroke="#555" stroke-width="1"/><path d="M0.8,8 L5,12.3 L8.2,9.1 L3.9,4.9 Z" fill="#d23a96" stroke="#9a1b6a" stroke-width="0.9"/></svg>
<svg style="position:absolute;left:795px;top:116.47249999999998px;" width="4.100000000000023" height="2.2550000000000128" viewBox="0 0 4.100000000000023 2.2550000000000128"><path d="M0.4,0.4 L2.0500000000000114,1.8550000000000129 L3.700000000000023,0.4" stroke="#333" stroke-width="1.2" fill="none"/></svg>
<svg style="position:absolute;left:818px;top:69px;" width="25" height="24" viewBox="0 0 25 24"><text x="0.8" y="10.5" font-family="Liberation Sans" font-size="12" fill="#1f6fc0">A</text><text x="0.9" y="22.6" font-family="Liberation Sans" font-size="12" fill="#555">Z</text><path d="M11.2,6.5 L23.5,6.5 L19,12.8 L19,19.5 L15.8,19.5 L15.8,12.8 Z" fill="#eeeeee" stroke="#555" stroke-width="1" stroke-linejoin="round"/></svg>
<div class="t" style="left:816.15px;top:97.50px;font-size:9.45px;color:#303030;font-weight:400;transform:scaleX(1.0682);">Sort &amp;</div>
<div class="t" style="left:815.67px;top:110.30px;font-size:9.45px;color:#303030;font-weight:400;transform:scaleX(0.9663);">Filter</div>
<svg style="position:absolute;left:839.9px;top:114.48249999999999px;" width="3.7000000000000455" height="2.035000000000025" viewBox="0 0 3.7000000000000455 2.035000000000025"><path d="M0.4,0.4 L1.8500000000000227,1.635000000000025 L3.3000000000000456,0.4" stroke="#333" stroke-width="1.2" fill="none"/></svg>
<svg style="position:absolute;left:855px;top:68px;" width="26" height="26" viewBox="0 0 26 26"><circle cx="15.4" cy="10.2" r="8.2" fill="#e2e2e2" stroke="#333" stroke-width="1.1"/><path d="M9.4,16.2 L1.2,24.5" stroke="#333" stroke-width="1.1"/></svg>
<div class="t" style="left:853.29px;top:97.50px;font-size:9.45px;color:#303030;font-weight:400;transform:scaleX(1.0717);">Find &amp;</div>
<div class="t" style="left:851.20px;top:110.30px;font-size:9.45px;color:#303030;font-weight:400;transform:scaleX(0.9400);">Select</div>
<svg style="position:absolute;left:878.9px;top:114.31749999999998px;" width="4.300000000000068" height="2.3650000000000375" viewBox="0 0 4.300000000000068 2.3650000000000375"><path d="M0.4,0.4 L2.150000000000034,1.9650000000000376 L3.9000000000000683,0.4" stroke="#333" stroke-width="1.2" fill="none"/></svg>
<svg style="position:absolute;left:907px;top:69.5px;" width="24" height="24" viewBox="0 0 24 24"><rect x="1" y="1" width="21.8" height="21.8" rx="1.5" fill="none" stroke="#c8513c" stroke-width="1.6"/><rect x="3.6" y="3.3" width="7.2" height="7.2" fill="none" stroke="#c8513c" stroke-width="1.1"/><rect x="13" y="3.3" width="7.2" height="7.2" fill="none" stroke="#c8513c" stroke-width="1.1"/><rect x="3.6" y="12.8" width="7.2" height="7.2" fill="none" stroke="#c8513c" stroke-width="1.1"/><rect x="13" y="12.8" width="7.2" height="7.2" fill="none" stroke="#c8513c" stroke-width="1.1"/></svg>
<div class="t" style="left:902.70px;top:97.50px;font-size:9.45px;color:#303030;font-weight:400;transform:scaleX(1.0380);">Add-ins</div>
<svg style="position:absolute;left:964px;top:70px;" width="23" height="25" viewBox="0 0 23 25"><path d="M9,20 L3,20 Q1.3,20 1.3,18.3 L1.3,3 Q1.3,1.3 3,1.3 L11.5,1.3 L16.5,6.3 L16.5,10" fill="none" stroke="#3a78d8" stroke-width="1.3"/><path d="M5,14 Q7.5,10 8.5,5.5 Q10,11 13.5,12.5 Q9,12 5,14 Z" fill="none" stroke="#3a78d8" stroke-width="0.9"/><g transform="translate(16,17) rotate(-45)" fill="none" stroke="#3a78d8" stroke-width="1.3"><rect x="-6.5" y="-2.2" width="7" height="4.4" rx="2.2"/><rect x="-0.5" y="-2.2" width="7" height="4.4" rx="2.2"/></g></svg>
<div class="t" style="left:958.64px;top:97.50px;font-size:9.45px;color:#303030;font-weight:400;transform:scaleX(0.9784);">Create</div>
<div class="t" style="left:959.74px;top:110.40px;font-size:9.45px;color:#303030;font-weight:400;transform:scaleX(0.9413);">a PDF</div>
<svg style="position:absolute;left:1009px;top:130px;" width="8.5" height="4.5" viewBox="0 0 8.5 4.5"><path d="M0.5,0.5 L4.25,4 L8,0.5" stroke="#333" stroke-width="1.1" fill="none"/></svg>
<svg style="position:absolute;left:13px;top:12.5px;" width="13" height="14" viewBox="0 0 13 14"><rect x="1.2" y="0.4" width="10.8" height="12.9" rx="1" fill="#1f7a33"/><path d="M1.2,4.4 L1.2,1.4 Q1.2,0.4 2.2,0.4 L6,0.4 L6,4.4 Z" fill="#58c95a"/><path d="M6,0.4 L11,0.4 Q12,0.4 12,1.4 L12,4.4 L6,4.4 Z" fill="#a6e86c"/><rect x="0" y="4.5" width="7" height="6.8" rx="0.8" fill="#10592a"/><path d="M2,6 L5,9.8 M5,6 L2,9.8" stroke="#f4f4f4" stroke-width="1.2"/></svg>
<svg style="position:absolute;left:78.9px;top:11.2px;" width="35.7" height="16.3" viewBox="0 0 35.7 16.3"><rect x="0.75" y="0.75" width="34.2" height="14.8" rx="7.4" fill="none" stroke="#8c8e90" stroke-width="1.5"/></svg>
<div style="position:absolute;left:81.6px;top:13.5px;width:11.6px;height:11.6px;background:#ffffff;border-radius:50%"></div>
<svg style="position:absolute;left:123px;top:12px;" width="15" height="15" viewBox="0 0 15 15"><path d="M1.3,1.3 L11,1.3 L13.7,4 L13.7,13.6 L3.5,13.6 L1.3,11.4 Z" fill="none" stroke="#e8e8e8" stroke-width="1.2" stroke-linejoin="round"/><path d="M3.8,1.3 L3.8,5.8 L11,5.8 L11,1.3 M3.8,13.6 L3.8,9 L11.2,9 L11.2,13.6" fill="none" stroke="#e8e8e8" stroke-width="1.2"/></svg>
<svg style="position:absolute;left:147px;top:12px;" width="14" height="15" viewBox="0 0 14 15"><path d="M1.8,6.5 Q4.5,2 8,2.5 Q12,3.2 12,7.3 Q12,9.5 10,11.5 L5.8,13.8" fill="none" stroke="#eaeaea" stroke-width="1.2"/><path d="M1.2,1.5 L1.5,7 L6.8,6.6" fill="none" stroke="#eaeaea" stroke-width="1.2"/></svg>
<svg style="position:absolute;left:164.3px;top:17.835000000000004px;" width="4.599999999999994" height="2.529999999999997" viewBox="0 0 4.599999999999994 2.529999999999997"><path d="M0.4,0.4 L2.299999999999997,2.1299999999999972 L4.199999999999994,0.4" stroke="#eaeaea" stroke-width="1.2" fill="none"/></svg>
<svg style="position:absolute;left:178px;top:12px;" width="14" height="15" viewBox="0 0 14 15"><g transform="translate(13,0) scale(-1,1)"><path d="M1.8,6.5 Q4.5,2 8,2.5 Q12,3.2 12,7.3 Q12,9.5 10,11.5 L5.8,13.8" fill="none" stroke="#707274" stroke-width="1.2"/><path d="M1.2,1.5 L1.5,7 L6.8,6.6" fill="none" stroke="#707274" stroke-width="1.2"/></g></svg>
<svg style="position:absolute;left:195.3px;top:17.917500000000008px;" width="4.299999999999983" height="2.364999999999991" viewBox="0 0 4.299999999999983 2.364999999999991"><path d="M0.4,0.4 L2.1499999999999915,1.964999999999991 L3.899999999999983,0.4" stroke="#707274" stroke-width="1.1" fill="none"/></svg>
<svg style="position:absolute;left:211.5px;top:16.5px;" width="7.5" height="6" viewBox="0 0 7.5 6"><path d="M0.3,0.8 L7.2,0.8" stroke="#e8e8e8" stroke-width="1.1"/><path d="M1,2.6 L3.75,5.3 L6.5,2.6" stroke="#e8e8e8" stroke-width="1.2" fill="none"/></svg>
<svg style="position:absolute;left:460.6px;top:17.190000000000005px;" width="8.399999999999977" height="4.619999999999988" viewBox="0 0 8.399999999999977 4.619999999999988"><path d="M0.4,0.4 L4.199999999999989,4.219999999999987 L7.999999999999977,0.4" stroke="#eeeeee" stroke-width="1.1" fill="none"/></svg>
<svg style="position:absolute;left:506px;top:12.5px;" width="13" height="13" viewBox="0 0 13 13"><circle cx="7.6" cy="5.3" r="4.1" fill="none" stroke="#3c3c3c" stroke-width="1.1"/><path d="M4.6,8.3 L0.8,12.1" stroke="#3c3c3c" stroke-width="1.2"/></svg>
<div style="position:absolute;left:929.8px;top:18.5px;width:9.3px;height:1.1px;background:#eeeeee"></div>
<svg style="position:absolute;left:968px;top:15px;" width="10.5" height="9.5" viewBox="0 0 10.5 9.5"><rect x="0.6" y="2.3" width="7.3" height="6.8" rx="1.3" fill="none" stroke="#eeeeee" stroke-width="1.1"/><path d="M2.6,0.6 L7.9,0.6 Q9.8,0.6 9.8,2.5 L9.8,7.2" fill="none" stroke="#eeeeee" stroke-width="1.1"/></svg>
<svg style="position:absolute;left:1007.5px;top:14.8px;" width="9" height="9.2" viewBox="0 0 9 9.2"><path d="M0.5,0.5 L8.5,8.7 M8.5,0.5 L0.5,8.7" stroke="#eeeeee" stroke-width="1.1"/></svg>
<svg style="position:absolute;left:889.5px;top:46px;" width="10" height="10" viewBox="0 0 10 10"><path d="M0.6,0.6 L9.2,0.6 L9.2,6.6 L4,6.6 L1.4,9.2 L1.4,6.6 L0.6,6.6 Z" fill="none" stroke="#333" stroke-width="1" stroke-linejoin="round"/></svg>
<svg style="position:absolute;left:968.5px;top:46px;" width="10" height="10" viewBox="0 0 10 10"><path d="M0.6,4 L0.6,9.3 L8.8,9.3 L8.8,7" fill="none" stroke="#1e1e1e" stroke-width="1"/><path d="M2.6,7.6 Q3,4.2 6.8,4 L6.8,5.8 L9.4,3.1 L6.8,0.5 L6.8,2.3 Q2.5,2.7 2.6,7.6 Z" fill="none" stroke="#1e1e1e" stroke-width="0.9" stroke-linejoin="round"/></svg>
<svg style="position:absolute;left:1013.3px;top:49.362500000000004px;" width="4.5" height="2.475" viewBox="0 0 4.5 2.475"><path d="M0.4,0.4 L2.25,2.075 L4.1,0.4" stroke="#1e1e1e" stroke-width="1.2" fill="none"/></svg>
<svg style="position:absolute;left:75.7px;top:157.82750000000001px;" width="7.8999999999999915" height="4.344999999999995" viewBox="0 0 7.8999999999999915 4.344999999999995"><path d="M0.4,0.4 L3.9499999999999957,3.9449999999999954 L7.499999999999991,0.4" stroke="#e0e0e0" stroke-width="1.1" fill="none"/></svg>
<div style="position:absolute;left:95.1px;top:154.8px;width:1.7px;height:1.7px;background:#d8d8d8;border-radius:50%"></div>
<div style="position:absolute;left:95.1px;top:158.4px;width:1.7px;height:1.7px;background:#d8d8d8;border-radius:50%"></div>
<div style="position:absolute;left:95.1px;top:162.0px;width:1.7px;height:1.7px;background:#d8d8d8;border-radius:50%"></div>
<svg style="position:absolute;left:109.5px;top:154px;" width="10.5" height="10.5" viewBox="0 0 10.5 10.5"><path d="M0.5,0.5 L9.8,9.8 M9.8,0.5 L0.5,9.8" stroke="#8e8e8e" stroke-width="1"/></svg>
<svg style="position:absolute;left:126.5px;top:154.5px;" width="14" height="10" viewBox="0 0 14 10"><path d="M0.7,5 L4.8,9.2 L13.3,0.6" stroke="#8e8e8e" stroke-width="1" fill="none"/></svg>
<div class="t" style="left:147.23px;top:153.07px;font-size:13.50px;color:#e6e6e6;font-weight:400;transform:scaleX(1.2503);font-family:Liberation Serif,serif;font-style:italic;">fx</div>
<svg style="position:absolute;left:1012.8px;top:157.545px;" width="8.200000000000045" height="4.5100000000000255" viewBox="0 0 8.200000000000045 4.5100000000000255"><path d="M0.4,0.4 L4.100000000000023,4.110000000000025 L7.800000000000045,0.4" stroke="#e0e0e0" stroke-width="1.1" fill="none"/></svg>
<svg style="position:absolute;left:46.5px;top:564.8px;" width="13" height="12.5" viewBox="0 0 13 12.5"><circle cx="5.6" cy="1.9" r="1.4" fill="none" stroke="#e6e6e6" stroke-width="0.9"/><path d="M1.2,4.6 Q5.6,5.6 10,4.6 M5.6,5.2 L5.6,8 Q4.8,10 3.2,11.6" fill="none" stroke="#e6e6e6" stroke-width="2.6" stroke-linecap="round"/><path d="M1.2,4.6 Q5.6,5.6 10,4.6 M5.6,5.2 L5.6,8 Q4.8,10 3.2,11.6" fill="none" stroke="#505050" stroke-width="1.1" stroke-linecap="round"/><path d="M6.5,8.2 L11.3,12 M11.3,8.2 L6.8,12" stroke="#e6e6e6" stroke-width="1"/></svg>
<div style="position:absolute;left:792px;top:562px;width:31.7px;height:17px;background:#5c5c5c"></div>
<svg style="position:absolute;left:802px;top:565px;" width="11.5" height="11.5" viewBox="0 0 11.5 11.5"><rect x="0.5" y="0.5" width="10.5" height="10.5" fill="none" stroke="#e8e8e8" stroke-width="1"/><path d="M4,0.5 L4,11 M7.5,0.5 L7.5,11 M0.5,4 L11,4 M0.5,7.5 L11,7.5" stroke="#e8e8e8" stroke-width="1"/></svg>
<svg style="position:absolute;left:833.5px;top:565px;" width="12.5" height="11.5" viewBox="0 0 12.5 11.5"><rect x="0.5" y="0.5" width="11.5" height="10.5" fill="none" stroke="#e0e0e0" stroke-width="1"/><rect x="3.3" y="2.6" width="6" height="6.3" fill="none" stroke="#e0e0e0" stroke-width="1"/><path d="M4.5,5.75 L8,5.75" stroke="#e0e0e0" stroke-width="0.9"/></svg>
<svg style="position:absolute;left:866px;top:565px;" width="12" height="11.5" viewBox="0 0 12 11.5"><path d="M0.5,0.5 L11.5,0.5 L11.5,11 L0.5,11 Z M0.5,7.3 L6,7.3 L6,0.5 M3.3,0.5 L3.3,7.3" fill="none" stroke="#e0e0e0" stroke-width="1"/></svg>
<div style="position:absolute;left:892.9px;top:569.8px;width:5.5px;height:1px;background:#d0d0d0"></div>
<div style="position:absolute;left:903.3px;top:570px;width:79.4px;height:1.6px;background:#9a9a9a"></div>
<div style="position:absolute;left:943.8px;top:566px;width:4.9px;height:9.5px;background:#c8c8c8;border-radius:1px"></div>
<div style="position:absolute;left:986.8px;top:569.8px;width:6.3px;height:1px;background:#d0d0d0"></div>
<div style="position:absolute;left:989.4px;top:567.2px;width:1px;height:6.3px;background:#d0d0d0"></div>
<div class="t" style="left:1003.18px;top:566.63px;font-size:9.30px;color:#e0e0e0;font-weight:400;transform:scaleX(0.8819);">125%</div>
</body></html>
